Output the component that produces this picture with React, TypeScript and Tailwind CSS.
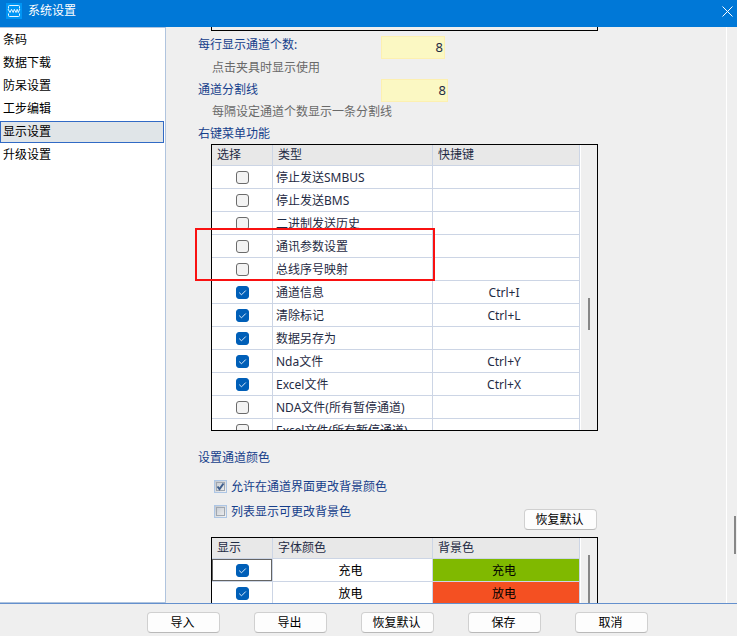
import type { ReactNode } from "react";

const navItems = ["条码", "数据下载", "防呆设置", "工步编辑", "显示设置", "升级设置"];

const menuRows = [
  { label: "停止发送SMBUS", checked: false, shortcut: "" },
  { label: "停止发送BMS", checked: false, shortcut: "" },
  { label: "二进制发送历史", checked: false, shortcut: "" },
  { label: "通讯参数设置", checked: false, shortcut: "" },
  { label: "总线序号映射", checked: false, shortcut: "" },
  { label: "通道信息", checked: true, shortcut: "Ctrl+I" },
  { label: "清除标记", checked: true, shortcut: "Ctrl+L" },
  { label: "数据另存为", checked: true, shortcut: "" },
  { label: "Nda文件", checked: true, shortcut: "Ctrl+Y" },
  { label: "Excel文件", checked: true, shortcut: "Ctrl+X" },
  { label: "NDA文件(所有暂停通道)", checked: false, shortcut: "" },
  { label: "Excel文件(所有暂停通道)", checked: false, shortcut: "" },
];

const colorRows = [
  { label: "充电", cell: "bg-[#80b900]" },
  { label: "放电", cell: "bg-[#f45022]" },
];

function Logo() {
  return (
    <svg viewBox="0 0 16 16" className="size-4" fill="none" aria-hidden="true">
      <rect width="16" height="16" fill="#0096f5" />
      <path d="M2.5 5.5v-2a1 1 0 0 1 1-1h9a1 1 0 0 1 1 1v2M2.5 10.5v2a1 1 0 0 0 1 1h9a1 1 0 0 0 1-1v-2" stroke="#e8f6ff" />
      <path d="M2 6 4 9.5 5.5 6.3 7.2 9.5 8.3 6.3 10 9.5 11.2 6.3 12.3 9.5 13.8 6" stroke="#fff" strokeWidth="0.9" />
    </svg>
  );
}

function CellCheckbox({ label, checked }: { label: string; checked: boolean }) {
  return (
    <label className="mx-auto grid size-[13px]">
      <input
        type="checkbox"
        defaultChecked={checked}
        aria-label={label}
        className="peer col-start-1 row-start-1 size-[13px] appearance-none rounded-[3px] border border-[#6b6b6b] bg-[#f3f3f3] checked:border-[#005fb8] checked:bg-[#005fb8]"
      />
      <svg
        viewBox="0 0 13 13"
        fill="none"
        stroke="#dcebfa"
        className="pointer-events-none invisible col-start-1 row-start-1 size-[13px] peer-checked:visible"
      >
        <path d="M3.2 6.6 5.5 8.8 9.8 4.5" />
      </svg>
    </label>
  );
}

function ClassicCheckbox({ id, label, checked }: { id: string; label: string; checked: boolean }) {
  return (
    <div className="flex h-[25px] items-center gap-1 text-[#153e8b]">
      <span className="grid">
        <input
          id={id}
          type="checkbox"
          defaultChecked={checked}
          className="peer col-start-1 row-start-1 size-[13px] appearance-none border border-[#adc6e5] bg-linear-to-br from-[#c3c8cf] to-[#f3f3f3] outline outline-offset-[-3px] outline-[#a0a7b0]"
        />
        <svg
          viewBox="0 0 13 13"
          fill="none"
          stroke="#3f5f8e"
          strokeWidth="2"
          className="pointer-events-none invisible col-start-1 row-start-1 size-[13px] peer-checked:visible"
        >
          <path d="M3.5 6.5 5.5 9 9.5 3.5" />
        </svg>
      </span>
      <label htmlFor={id}>{label}</label>
    </div>
  );
}

function PushButton({ children }: { children: ReactNode }) {
  return (
    <button
      type="button"
      className="h-[21px] w-[73px] rounded-[4px] border border-[#d0d0d0] border-b-[#b9b9b9] bg-[#fdfdfd] pr-0.5 leading-[18px] text-black"
    >
      {children}
    </button>
  );
}

function HeadCell({ children }: { children: ReactNode }) {
  return (
    <th className="h-[21px] border-r border-b border-[#ccd5e5] bg-[#e8e8e8] p-0 pl-[5px] text-left leading-5 font-normal">
      {children}
    </th>
  );
}

function Columns() {
  return (
    <colgroup>
      <col className="w-[61px]" />
      <col className="w-40" />
      <col className="w-[147px]" />
    </colgroup>
  );
}

export default function App() {
  return (
    <div className="flex h-screen flex-col overflow-hidden bg-[#efefef] font-['Noto_Sans','Noto_Sans_CJK_SC',sans-serif] text-[12px] leading-[22px]">
      {/* Title bar */}
      <header className="flex h-[27px] shrink-0 items-start justify-between bg-[#0078d7] pr-1 pl-1.5 text-white">
        <div className="flex gap-1.5">
          <div className="pt-[3px]">
            <Logo />
          </div>
          <h1>系统设置</h1>
        </div>
        <button type="button" aria-label="关闭" className="pt-1.5">
          <svg viewBox="0 0 11 11" className="size-[11px]" stroke="#fff" fill="none">
            <path d="M.5.5l10 10M10.5.5l-10 10" />
          </svg>
        </button>
      </header>

      <div className="flex min-h-0 flex-1">
        {/* Sidebar */}
        <nav className="flex w-[166px] shrink-0 flex-col gap-px border-t border-r border-b border-[#b0c4de] bg-white pt-px pr-px text-black">
          {navItems.map((item) => (
            <a
              key={item}
              href="#"
              className={
                item === "显示设置"
                  ? "h-[22px] border border-[#316ac5] bg-[#e0e5e8] pl-0.5 leading-5"
                  : "h-[22px] pl-[3px]"
              }
            >
              {item}
            </a>
          ))}
        </nav>

        {/* Settings */}
        <main className="min-w-0 flex-1 overflow-hidden pl-8">
          <div className="ml-[13px] h-1 w-[387px] border-x border-b border-black" />

          <div className="flex">
            <div className="w-[183px] pt-[3px] whitespace-nowrap">
              <label htmlFor="perRow" className="block text-[#153e8b]">每行显示通道个数:</label>
              <p className="pt-px pl-3.5 text-[#696969]">点击夹具时显示使用</p>
              <label htmlFor="divider" className="block text-[#153e8b]">通道分割线</label>
              <p className="pl-3.5 text-[#696969]">每隔设定通道个数显示一条分割线</p>
            </div>
            <div className="flex flex-col gap-5 pt-[5px]">
              <input
                id="perRow"
                defaultValue="8"
                className="h-[23px] w-16 border border-[#fdf0b0] bg-[#fbf8c3] pr-px pb-0.5 text-right text-[13px] text-[#1f2b44]"
              />
              <input
                id="divider"
                defaultValue="8"
                className="h-[23px] w-[67px] border border-[#fdf0b0] bg-[#fbf8c3] pr-px pb-0.5 text-right text-[13px] text-[#1f2b44]"
              />
            </div>
          </div>

          <h2 className="leading-[21px] text-[#153e8b]">右键菜单功能</h2>
          <div className="relative ml-[13px] w-[387px]">
            <div className="flex h-[287px] overflow-hidden border border-black">
              <table className="w-[368px] shrink-0 table-fixed border-separate border-spacing-0 self-start bg-white text-[#1f2b44]">
                <Columns />
                <thead>
                  <tr>
                    <HeadCell>选择</HeadCell>
                    <HeadCell>类型</HeadCell>
                    <HeadCell>快捷键</HeadCell>
                  </tr>
                </thead>
                <tbody className="leading-[21px]">
                  {menuRows.map((row) => (
                    <tr key={row.label}>
                      <td className="h-[23px] border-r border-b border-[#ccd5e5] p-0">
                        <CellCheckbox label={row.label} checked={row.checked} />
                      </td>
                      <td className="border-r border-b border-[#ccd5e5] p-0 pt-px pl-[3px] whitespace-nowrap">{row.label}</td>
                      <td className="border-r border-b border-[#ccd5e5] p-0 pt-px pr-1 text-center">{row.shortcut}</td>
                    </tr>
                  ))}
                </tbody>
              </table>
              <div className="flex-1 border-l border-white pt-[153px] pl-[7px]">
                <div className="h-8 w-0.5 bg-[#878787]" />
              </div>
            </div>
            {/* Marker around the two communication rows */}
            <div className="pointer-events-none absolute top-[84px] -left-4 h-[53px] w-60 border-2 border-[#f91111]" />
          </div>

          <h2 className="pt-4 text-[#153e8b]">设置通道颜色</h2>
          <div className="pt-[5px] pl-4">
            <ClassicCheckbox id="allowChange" label="允许在通道界面更改背景颜色" checked />
            <ClassicCheckbox id="listChange" label="列表显示可更改背景色" checked={false} />
          </div>
          <div className="-mt-[15px] flex w-[399px] justify-end pb-[7px]">
            <PushButton>恢复默认</PushButton>
          </div>

          <div className="ml-[13px] flex w-[387px] border border-black">
            <table className="w-[368px] shrink-0 table-fixed border-separate border-spacing-0 bg-white text-black">
              <Columns />
              <thead className="text-[#1f2b44]">
                <tr>
                  <HeadCell>显示</HeadCell>
                  <HeadCell>字体颜色</HeadCell>
                  <HeadCell>背景色</HeadCell>
                </tr>
              </thead>
              <tbody className="leading-[21px]">
                {colorRows.map((row, i) => (
                  <tr key={row.label}>
                    <td className="h-[23px] border-r border-b border-[#ccd5e5] p-0">
                      <div
                        className={
                          i === 0
                            ? "flex h-[22px] items-center border border-[#646464]"
                            : "flex h-[22px] items-center"
                        }
                      >
                        <CellCheckbox label={row.label} checked />
                      </div>
                    </td>
                    <td className="border-r border-b border-[#ccd5e5] p-0 pt-px pr-1 text-center">{row.label}</td>
                    <td className={`border-r border-b border-[#ccd5e5] p-0 pt-px pr-1 text-center ${row.cell}`}>{row.label}</td>
                  </tr>
                ))}
              </tbody>
            </table>
            <div className="flex-1 border-l border-white pt-[17px] pl-[7px]">
              <div className="h-full w-0.5 bg-[#878787]" />
            </div>
          </div>
        </main>

        {/* Page scrollbar */}
        <div className="flex w-[11px] shrink-0 flex-col items-end justify-end border-l border-white pr-px pb-[49px]">
          <div className="h-[38px] w-0.5 bg-[#878787]" />
        </div>
      </div>

      {/* Actions */}
      <footer className="flex h-[33px] shrink-0 gap-[34px] border-t border-[#6490cd] pt-2 pl-[147px]">
        <PushButton>导入</PushButton>
        <PushButton>导出</PushButton>
        <PushButton>恢复默认</PushButton>
        <PushButton>保存</PushButton>
        <PushButton>取消</PushButton>
      </footer>
    </div>
  );
}
